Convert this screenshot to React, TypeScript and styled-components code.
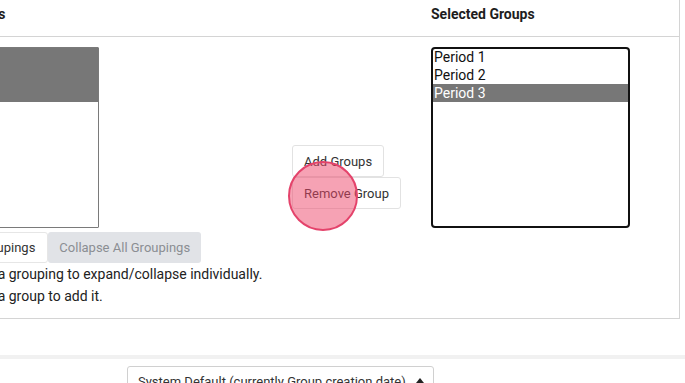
import styled, { createGlobalStyle } from "styled-components";

const GlobalStyle = createGlobalStyle`
  html, body {
    margin: 0;
    padding: 0;
    background: #fff;
    overflow: hidden;
  }
  body {
    font-family: Roboto, "Liberation Sans", sans-serif;
    color: #212529;
  }
`;

const Page = styled.div`
  width: 685px;
  height: 383px;
  overflow: hidden;
`;

const Card = styled.div`
  margin: -10px 5px 0 -120px;
  border: 1px solid #d4d4d4;
  background: #fff;
`;

const Columns = styled.div`
  display: grid;
  grid-template-columns: 200px 1fr 199px;
  padding: 0 49px 0 18px;
`;

const CardHeader = styled(Columns)`
  padding-top: 13px;
  padding-bottom: 12px;
  border-bottom: 1px solid #d4d4d4;
`;

const Heading = styled.h3`
  margin: 0;
  font-size: 14px;
  line-height: 20px;
  font-weight: 700;
  color: #1d1d1d;
`;

const CardBody = styled(Columns)`
  padding-top: 10px;
  padding-bottom: 11px;
`;

const Column = styled.div`
  display: flex;
  flex-direction: column;
`;

const ListBox = styled.div<{ $focused?: boolean }>`
  box-sizing: border-box;
  height: 181px;
  background: #fff;
  border: ${(p) => (p.$focused ? "2px solid #111" : "1px solid #7a7a7a")};
  border-radius: ${(p) => (p.$focused ? "4px" : "1px")};
  overflow: hidden;
  & > :first-child {
    margin-top: ${(p) => (p.$focused ? "-1px" : "0")};
  }
`;

const Option = styled.div<{ $selected?: boolean }>`
  height: 18px;
  line-height: 18px;
  font-size: 14px;
  padding: 0 1px;
  white-space: nowrap;
  color: ${(p) => (p.$selected ? "#fff" : "#111")};
  background: ${(p) => (p.$selected ? "#777" : "transparent")};
`;

const ToggleRow = styled.div`
  display: flex;
  margin-top: 4px;
`;

const ToggleButton = styled.button<{ $muted?: boolean }>`
  height: 31px;
  padding: 0 ${(p) => (p.$muted ? "11px" : "12px")};
  font-family: inherit;
  font-size: 13px;
  white-space: nowrap;
  border-radius: 3px;
  border: ${(p) => (p.$muted ? "none" : "1px solid #e6e6e6")};
  background: ${(p) => (p.$muted ? "#e1e3e7" : "#fff")};
  color: ${(p) => (p.$muted ? "#8b8e93" : "#333")};
`;

const Hint = styled.div`
  font-size: 14px;
  line-height: 22px;
  white-space: nowrap;
  color: #222;
`;

const MiddleColumn = styled.div`
  display: flex;
  align-items: center;
  justify-content: flex-end;
  padding-right: 30px;
`;

const MoveButtons = styled.div`
  position: relative;
  display: flex;
  flex-direction: column;
  align-items: flex-start;
`;

const MoveButton = styled.button`
  height: 32px;
  padding: 0 11px;
  font-family: inherit;
  font-size: 13px;
  white-space: nowrap;
  color: #333;
  background: #fff;
  border: 1px solid #e2e2e2;
  border-radius: 3px;
`;

const ClickMark = styled.div`
  position: absolute;
  left: -4px;
  top: 16px;
  width: 70px;
  height: 70px;
  box-sizing: border-box;
  border-radius: 50%;
  border: 2px solid #e4436b;
  background: rgba(238, 70, 105, 0.5);
  pointer-events: none;
`;

const Divider = styled.div`
  margin-top: 36px;
  height: 4px;
  background: #f1f1f1;
`;

const SortRow = styled.div`
  display: flex;
  padding: 7px 0 0 127px;
`;

const SortSelect = styled.div`
  box-sizing: border-box;
  width: 307px;
  height: 31px;
  display: flex;
  align-items: center;
  justify-content: space-between;
  padding: 0 9px 0 10px;
  border: 1px solid #d0d0d0;
  border-radius: 3px;
  font-size: 13px;
  color: #333;
  white-space: nowrap;
`;

const Caret = styled.span`
  width: 0;
  height: 0;
  border-left: 4px solid transparent;
  border-right: 4px solid transparent;
  border-bottom: 5px solid #222;
  margin-top: -3px;
`;

const available = ["Period 4", "Period 5", "Period 6"];
const selected = ["Period 1", "Period 2", "Period 3"];

export default function App() {
  return (
    <Page>
      <GlobalStyle />
      <Card>
        <CardHeader>
          <Heading>Available Groups</Heading>
          <span />
          <Heading>Selected Groups</Heading>
        </CardHeader>
        <CardBody>
          <Column>
            <ListBox>
              {available.map((name) => (
                <Option key={name} $selected>
                  {name}
                </Option>
              ))}
            </ListBox>
            <ToggleRow>
              <ToggleButton>Expand All Groupings</ToggleButton>
              <ToggleButton $muted>Collapse All Groupings</ToggleButton>
            </ToggleRow>
            <Hint>Double-click on a grouping to expand/collapse individually.</Hint>
            <Hint>Double-click on a group to add it.</Hint>
          </Column>
          <MiddleColumn>
            <MoveButtons>
              <MoveButton>Add Groups</MoveButton>
              <MoveButton>Remove Group</MoveButton>
              <ClickMark />
            </MoveButtons>
          </MiddleColumn>
          <Column>
            <ListBox $focused>
              {selected.map((name, i) => (
                <Option key={name} $selected={i === 2}>
                  {name}
                </Option>
              ))}
            </ListBox>
          </Column>
        </CardBody>
      </Card>
      <Divider />
      <SortRow>
        <SortSelect>
          System Default (currently Group creation date)
          <Caret />
        </SortSelect>
      </SortRow>
    </Page>
  );
}
